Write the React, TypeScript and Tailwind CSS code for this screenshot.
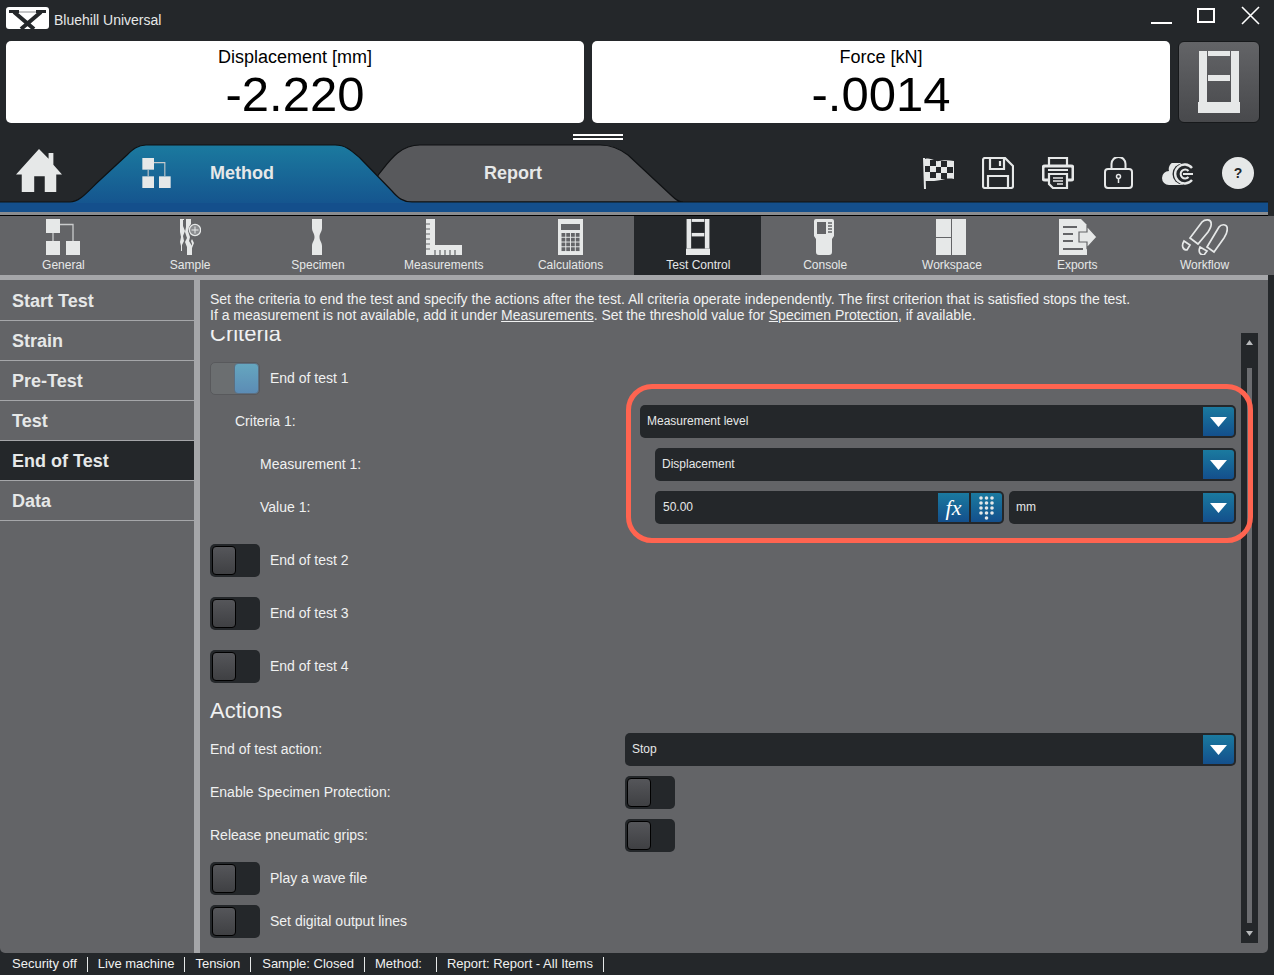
import { ReactNode } from 'react';

const FONT = "font-['Liberation_Sans',Arial,sans-serif]";

function Caret() {
  return (
    <span className="flex h-[29px] w-[31px] items-center justify-center rounded-r-[3px] bg-gradient-to-b from-[#1b7a9f] to-[#144f8c]">
      <svg width="17" height="10" viewBox="0 0 17 10">
        <path d="M0 0h17L8.500 10z" fill="#fff" />
      </svg>
    </span>
  );
}

function Select({ value, className }: { value: string; className: string }) {
  return (
    <div className={`flex h-[33px] items-center justify-between rounded-[5px] bg-[#24272a] pl-[7px] pr-[2px] text-xs text-[#e6e8e8] ${className}`}>
      <span className="mb-[2px]">{value}</span>
      <Caret />
    </div>
  );
}

function Toggle({ on }: { on?: boolean }) {
  if (on) {
    return (
      <div className="flex h-[33px] w-[50px] shrink-0 justify-end rounded-[5px] border border-[#58595c] bg-[#6b6e70]">
        <div className="h-full w-[25px] rounded-[4px] border border-[#5b6f82] bg-gradient-to-b from-[#65a6bf] to-[#5c8cb5]" />
      </div>
    );
  }
  return (
    <div className="flex h-[33px] w-[50px] shrink-0 rounded-[5px] bg-[#24272a] p-[2px]">
      <div className="h-full w-[24px] rounded-[4px] border border-black bg-gradient-to-b from-[#55565a] to-[#3f4043]" />
    </div>
  );
}

function ToggleRow({ label, mt }: { label: string; mt: string }) {
  return (
    <div className={`flex items-center gap-[10px] ${mt}`}>
      <Toggle />
      <span className="mb-[2px]">{label}</span>
    </div>
  );
}

function Label({ children, w }: { children: ReactNode; w: string }) {
  return <span className={`mb-[2px] shrink-0 ${w}`}>{children}</span>;
}

/* ---- icons ---- */
const IC = '#e6e8e8';
const BG = '#636467';

function OrgIcon({ w, h }: { w: number; h: number }) {
  return (
    <svg width={w} height={h} viewBox="0 0 34 36">
      <g fill={IC}>
        <rect x="0" y="0" width="14" height="14" />
        <rect x="0" y="22" width="14" height="14" />
        <rect x="20" y="22" width="14" height="14" />
      </g>
      <path d="M14 5.500h13V22M7 14v8" fill="none" stroke="#c9cbcc" strokeWidth="1.300" />
    </svg>
  );
}

function SampleIcon() {
  return (
    <svg width="21" height="36" viewBox="0 0 21 36">
      <g fill={IC}>
        <path d="M0 0h4v1H3v6l2 5-2 5 1 5-2 4v6H1v-5L0 23l1-5-1-5z" />
        <path d="M6 0h5v5l-2 3-1 4 2 6-1 4 3 5v9H7v-8l-2-5 2-4-2-6 1-5z" />
        <path d="M12 20l2 4-2 5h-1l1-4-1-3z" />
      </g>
      <circle cx="15" cy="11" r="5.600" fill="#8a8c8f" stroke={IC} strokeWidth="1.300" />
      <path d="M11.500 11h7M15 7.500v7" stroke={IC} strokeWidth="1" />
    </svg>
  );
}

function SpecimenIcon() {
  return (
    <svg width="10" height="36" viewBox="0 0 10 36">
      <path d="M0 0h10v9c0 4-2.500 5-2.500 9s2.500 5 2.500 9v9H0v-9c0-4 2.500-5 2.500-9S0 13 0 9z" fill={IC} />
    </svg>
  );
}

function RulerIcon() {
  return (
    <svg width="36" height="36" viewBox="0 0 36 36">
      <path d="M0 0h9v26h27v10H0z" fill={IC} />
      <path d="M0 5h4M0 10h4M0 15h4M0 20h4M0 25h4M0 30h4M9 36v-5M14 36v-5M19 36v-5M24 36v-5M29 36v-5" stroke={BG} strokeWidth="1.200" />
    </svg>
  );
}

function CalcIcon() {
  const cells = [];
  for (let r = 0; r < 4; r++) {
    for (let c = 0; c < 4; c++) {
      cells.push(<rect key={`${r}-${c}`} x={3.500 + c * 4.750} y={14 + r * 4.750} width="3.800" height="3.800" fill={BG} />);
    }
  }
  return (
    <svg width="25" height="36" viewBox="0 0 25 36">
      <rect x="0" y="0" width="25" height="36" fill={IC} />
      <rect x="3" y="5" width="19" height="6" fill={BG} />
      {cells}
    </svg>
  );
}

function FrameIcon({ w, h }: { w: number; h: number }) {
  return (
    <svg width={w} height={h} viewBox="0 0 42 62" preserveAspectRatio="none">
      <g fill={IC}>
        <rect x="1" y="0" width="8" height="51" />
        <rect x="33" y="0" width="8" height="51" />
        <rect x="10" y="0" width="22" height="5" />
        <rect x="10" y="24" width="22" height="6" />
        <rect x="0" y="51" width="42" height="11" />
      </g>
    </svg>
  );
}

function ConsoleIcon() {
  return (
    <svg width="20" height="36" viewBox="0 0 20 36">
      <path d="M2 0h16a2 2 0 0 1 2 2v15l-2 3v13a3 3 0 0 1-3 3H5a3 3 0 0 1-3-3V20L0 17V2a2 2 0 0 1 2-2z" fill={IC} />
      <rect x="3" y="3" width="9" height="12" fill={BG} />
      <path d="M14 4h4M14 7h4M14 10h4M14 13h4" stroke={BG} strokeWidth="1.400" />
    </svg>
  );
}

function WorkspaceIcon() {
  return (
    <svg width="30" height="36" viewBox="0 0 30 36">
      <g fill={IC}>
        <rect x="0" y="0" width="15" height="18" />
        <rect x="0" y="19" width="15" height="17" />
        <rect x="16" y="0" width="14" height="36" />
      </g>
    </svg>
  );
}

function ExportIcon() {
  return (
    <svg width="38" height="36" viewBox="0 0 38 36">
      <path d="M0 0h22l6 6v30H0z" fill={IC} />
      <path d="M4 8h14M4 15h10M4 22h10M4 30h20" stroke={BG} strokeWidth="1.800" />
      <path d="M20 13h8V7l10 11-10 11v-6h-8z" fill={IC} stroke={BG} strokeWidth="1.200" />
    </svg>
  );
}

function WorkflowIcon() {
  return (
    <svg width="47" height="36" viewBox="0 0 47 36" fill="none" stroke={IC} strokeWidth="1.700">
      <path d="M9 19L21 3c3-3 9-3 9 1 1 3-1 6-3 9L17 25z" />
      <path d="M3 22l6 4-3 5c-4 0-6-4-3-9z" />
      <path d="M26 28l12-20c2-3 7-3 8 0 1 4-1 8-3 11L33 33z" />
      <path d="M19 28l7 4-3 4c-4 0-6-3-4-8z" />
    </svg>
  );
}

function TopIcons() {
  return (
    <div className="flex items-start">
      <svg width="31" height="32" viewBox="0 0 31 32" className="ml-[923px]">
        <path d="M1 1l1 31" stroke={IC} strokeWidth="2" />
        <path d="M2 2c6-2 10 3 14 2s10-1 15 0v18c-5-1-9 0-13 1s-9 1-16 1z" fill={IC} />
        <g fill="#24272a">
          <rect x="7" y="3" width="6" height="6" /><rect x="18" y="4" width="6" height="6" />
          <rect x="2" y="9" width="5" height="6" /><rect x="13" y="10" width="5" height="6" /><rect x="24" y="10" width="6" height="6" />
          <rect x="7" y="15" width="6" height="6" /><rect x="18" y="16" width="6" height="6" />
        </g>
      </svg>
      <svg width="32" height="32" viewBox="0 0 32 32" className="ml-[28px]" fill="none" stroke={IC} strokeWidth="2.200">
        <path d="M3 1h20l8 8v20a2 2 0 0 1-2 2H3a2 2 0 0 1-2-2V3a2 2 0 0 1 2-2z" />
        <path d="M8 1v11h14V1M18 4v5" />
        <path d="M6 31V19h20v12" />
      </svg>
      <svg width="32" height="32" viewBox="0 0 32 32" className="ml-[28px]" fill="none" stroke={IC} strokeWidth="2.200">
        <path d="M7 9V1h18v8" />
        <path d="M7 23H3a2 2 0 0 1-2-2V11a2 2 0 0 1 2-2h26a2 2 0 0 1 2 2v10a2 2 0 0 1-2 2h-4" strokeWidth="3" />
        <path d="M6 13h20" strokeWidth="2" />
        <path d="M7 17h18v14H11l-4-4z" fill="#24272a" />
        <path d="M11 21h10M11 24h10M15 27h6" strokeWidth="1.600" />
      </svg>
      <svg width="29" height="32" viewBox="0 0 29 32" className="ml-[30px]" fill="none" stroke={IC} strokeWidth="2">
        <path d="M7.500 12V7a7 7 0 0 1 14 0v5" />
        <rect x="1" y="12" width="27" height="19" rx="3" />
        <circle cx="14.500" cy="19.500" r="2" strokeWidth="1.500" />
        <path d="M14.500 21.500V26" strokeWidth="1.500" />
      </svg>
      <svg width="32" height="22" viewBox="0 0 32 22" className="ml-[29px] mt-[6px]">
        <path d="M7 8a7 7 0 0 0 0 14h14V4a7 7 0 0 0-14 4z" fill={IC} />
        <circle cx="21" cy="11" r="10.500" fill="#24272a" />
        <path d="M30 5a9.500 9.500 0 1 0 0 12" fill="none" stroke={IC} strokeWidth="2.400" />
        <path d="M26.500 8a4.500 4.500 0 1 0 0 6" fill="none" stroke={IC} strokeWidth="2" />
        <path d="M21 11h10" stroke={IC} strokeWidth="2" />
      </svg>
      <div className="ml-[28px] flex h-[32px] w-[32px] items-center justify-center rounded-full bg-[#e6e8e8] text-sm font-bold text-[#24272a]">?</div>
    </div>
  );
}

const NAV = [
  { label: 'General', icon: <OrgIcon w={34} h={36} />, shift: '' },
  { label: 'Sample', icon: <SampleIcon />, shift: '' },
  { label: 'Specimen', icon: <SpecimenIcon />, shift: 'ml-[2px]' },
  { label: 'Measurements', icon: <RulerIcon />, shift: '' },
  { label: 'Calculations', icon: <CalcIcon />, shift: '' },
  { label: 'Test Control', icon: <div className="ml-[2px]"><FrameIcon w={24} h={36} /></div>, shift: 'ml-[2px]', active: true },
  { label: 'Console', icon: <ConsoleIcon />, shift: 'ml-[2px]' },
  { label: 'Workspace', icon: <WorkspaceIcon />, shift: 'ml-[2px]' },
  { label: 'Exports', icon: <ExportIcon />, shift: 'mr-[1px]' },
  { label: 'Workflow', icon: <WorkflowIcon />, shift: '' },
];

const SIDE = ['Start Test', 'Strain', 'Pre-Test', 'Test', 'End of Test', 'Data'];

const STATUS = ['Security off', 'Live machine', 'Tension', 'Sample: Closed', 'Method:', 'Report: Report - All Items'];

export default function App() {
  return (
    <div className={`relative flex h-[975px] w-[1274px] flex-col overflow-hidden bg-[#24272a] ${FONT}`}>
      {/* title bar */}
      <div className="flex h-[41px] shrink-0 items-start">
        <div className="ml-[6px] mt-[7px] h-[22px] w-[43px] rounded-[3px] bg-white">
          <svg width="43" height="22" viewBox="0 0 43 22">
            <g stroke="#24272a" fill="none">
              <path d="M8 5l20 17M35 5L15 22" strokeWidth="4" />
              <path d="M3 4.500h10M30 4.500h10" strokeWidth="3" />
              <path d="M13 5h17" strokeWidth="1" stroke="#8a8c8f" />
            </g>
          </svg>
        </div>
        <span className="ml-[5px] mt-[12px] text-sm leading-4 text-[#e6e8e8]">Bluehill Universal</span>
        <div className="ml-[990px] flex items-start">
          <div className="mt-[22px] h-[2px] w-[21px] bg-white" />
          <div className="ml-[25px] mt-[8px] h-[15px] w-[18px] border-2 border-white" />
          <svg width="19" height="19" viewBox="0 0 19 19" className="ml-[26px] mt-[6px]" stroke="#fff" strokeWidth="1.600">
            <path d="M1 1l17 17M18 1L1 18" />
          </svg>
        </div>
      </div>

      {/* readouts */}
      <div className="flex h-[82px] shrink-0 gap-[8px] pl-[6px]">
        <div className="flex w-[578px] flex-col items-center rounded-[5px] bg-white text-black">
          <span className="mt-[5px] text-lg leading-[22px]">Displacement [mm]</span>
          <span className="mt-[1px] text-[49px] leading-[50px]">-2.220</span>
        </div>
        <div className="flex w-[578px] flex-col items-center rounded-[5px] bg-white text-black">
          <span className="mt-[5px] text-lg leading-[22px]">Force [kN]</span>
          <span className="mt-[1px] text-[49px] leading-[50px]">-.0014</span>
        </div>
        <div className="flex w-[82px] items-center justify-center rounded-[6px] border border-[#17191b] bg-gradient-to-b from-[#636467] to-[#48494c]">
          <FrameIcon w={42} h={62} />
        </div>
      </div>

      {/* grip handle */}
      <div className="flex h-[21px] shrink-0 flex-col items-center pt-[11px]">
        <div className="ml-[-79px] h-[6px] w-[50px] border-y-2 border-white" />
      </div>

      {/* tab strip */}
      <div className="relative h-[59px] shrink-0">
        <svg width="1274" height="69" viewBox="0 0 1274 69" className="absolute left-0 top-0">
          <defs>
            <linearGradient id="tab" x1="0" y1="0" x2="0" y2="1">
              <stop offset="0" stopColor="#1b7a9f" />
              <stop offset="1" stopColor="#144f8c" />
            </linearGradient>
          </defs>
          <path d="M360 58L379 30C390 16 400 1 420 1H600C612 1 620 5 628 11L672 52C676 56 679 58 683 58z" fill="#58595c" stroke="#0f1113" strokeWidth="1.200" />
          <path d="M0 58H70C80 58 88 47 100 36L127 11C133 5 138 1 146 1H335C346 1 352 7 360 14L392 47C398 54 403 58 412 58H1268V69H0z" fill="url(#tab)" />
          <path d="M0 58H70C80 58 88 47 100 36L127 11C133 5 138 1 146 1H335C346 1 352 7 360 14L392 47C398 54 403 58 412 58H1268" fill="none" stroke="#0f1113" strokeWidth="1.200" />
        </svg>
        <svg width="46" height="43" viewBox="0 0 48 44" className="absolute left-[16px] top-[5px]" preserveAspectRatio="none">
          <path d="M24 0l10 10V4h5v12l9 10h-6v18H30V28H19v16H6V26H0z" fill={IC} />
        </svg>
        <div className="absolute left-[142px] top-[14px]"><OrgIcon w={29} h={30} /></div>
        <span className="absolute left-[210px] top-[19px] text-lg font-bold leading-5 text-[#e6e8e8]">Method</span>
        <span className="absolute left-[484px] top-[19px] text-lg font-bold leading-5 text-[#e6e8e8]">Report</span>
        <div className="absolute left-0 top-[13px]"><TopIcons /></div>
      </div>

      {/* blue band and edge */}
      <div className="relative h-[13px] shrink-0 pr-[6px]">
        <div className="h-[9px] bg-[#144f8c]" />
        <div className="h-[3px] bg-[#8a8c8f]" />
        <div className="h-[1px] bg-black" />
      </div>

      {/* ribbon */}
      <div className="flex h-[59px] shrink-0 bg-[#636467] pr-[6px]">
        <div className="flex w-[1268px]">
          {NAV.map((n) => (
            <div key={n.label} className={`flex flex-1 flex-col items-center ${n.active ? 'bg-[#24272a]' : ''}`}>
              <div className="mt-[3px] flex h-[36px] items-center justify-center">{n.icon}</div>
              <span className={`mt-[3px] text-xs leading-[14px] text-[#e6e8e8] ${n.shift}`}>{n.label}</span>
            </div>
          ))}
        </div>
      </div>
      <div className="h-[5px] w-[1268px] shrink-0 bg-[#a5a6a9]" />

      {/* main */}
      <div className="flex h-[673px] shrink-0 pr-[6px]">
        <div className="w-[194px] shrink-0 rounded-bl-[5px] bg-[#636467] pt-[1px]">
          {SIDE.map((s) => (
            <div
              key={s}
              className={`flex h-[40px] items-center border-b border-[#a5a6a9] pl-[12px] text-lg font-bold text-[#e6e8e8] ${s === 'End of Test' ? 'bg-[#24272a]' : ''}`}
            >
              {s}
            </div>
          ))}
        </div>
        <div className="w-[6px] shrink-0 bg-[#a5a6a9]" />
        <div className="relative flex min-w-0 flex-1 flex-col rounded-br-[5px] bg-[#636467] pl-[10px] text-sm text-[#f0f1f1]">
          <p className="mt-[11px] h-[39px] leading-4">
            Set the criteria to end the test and specify the actions after the test. All criteria operate independently. The first criterion that is satisfied stops the test.
            <br />
            If a measurement is not available, add it under <u>Measurements</u>. Set the threshold value for <u>Specimen Protection</u>, if available.
          </p>
          <div className="h-[14px] overflow-hidden">
            <div className="mt-[-10px] text-[22px] leading-[28px]">Criteria</div>
          </div>

          <div className="mt-[18px] flex items-center gap-[10px]">
            <Toggle on />
            <span className="mb-[2px]">End of test 1</span>
          </div>
          <div className="mt-[10px] flex h-[33px] items-center pl-[25px]">
            <Label w="w-[405px]">Criteria 1:</Label>
            <Select value="Measurement level" className="w-[596px]" />
          </div>
          <div className="mt-[10px] flex h-[33px] items-center pl-[50px]">
            <Label w="w-[395px]">Measurement 1:</Label>
            <Select value="Displacement" className="w-[581px]" />
          </div>
          <div className="mt-[10px] flex h-[33px] items-center pl-[50px]">
            <Label w="w-[395px]">Value 1:</Label>
            <div className="flex h-[33px] w-[349px] items-center justify-between rounded-[5px] bg-[#24272a] pl-[8px] pr-[2px] text-xs text-[#e6e8e8]">
              <span className="mb-[2px]">50.00</span>
              <span className="flex gap-[2px]">
                <span className="flex h-[29px] w-[31px] items-center justify-center bg-gradient-to-b from-[#1b7a9f] to-[#144f8c] font-['Liberation_Serif',serif] text-[22px] italic leading-none text-white">
                  fx
                </span>
                <span className="flex h-[29px] w-[31px] items-center justify-center rounded-r-[3px] bg-gradient-to-b from-[#1b7a9f] to-[#144f8c]">
                  <svg width="15" height="24" viewBox="0 0 15 24" fill="#e6e8e8">
                    {[2, 7.500, 13].map((x) => [2, 7, 12, 17].map((y) => <circle key={`${x}-${y}`} cx={x} cy={y} r="1.800" />))}
                    <circle cx="7.500" cy="22" r="1.800" />
                  </svg>
                </span>
              </span>
            </div>
            <Select value="mm" className="ml-[5px] w-[227px]" />
          </div>

          <ToggleRow label="End of test 2" mt="mt-[20px]" />
          <ToggleRow label="End of test 3" mt="mt-[20px]" />
          <ToggleRow label="End of test 4" mt="mt-[20px]" />

          <div className="mt-[14px] text-[22px] leading-[28px]">Actions</div>

          <div className="mt-[8px] flex h-[33px] items-center">
            <Label w="w-[415px]">End of test action:</Label>
            <Select value="Stop" className="w-[611px]" />
          </div>
          <div className="mt-[10px] flex h-[33px] items-center">
            <Label w="w-[415px]">Enable Specimen Protection:</Label>
            <Toggle />
          </div>
          <div className="mt-[10px] flex h-[33px] items-center">
            <Label w="w-[415px]">Release pneumatic grips:</Label>
            <Toggle />
          </div>
          <ToggleRow label="Play a wave file" mt="mt-[10px]" />
          <ToggleRow label="Set digital output lines" mt="mt-[10px]" />

          {/* scrollbar */}
          <div className="absolute left-[1041px] top-[53px] flex h-[610px] w-[17px] flex-col items-center bg-[#24272a] py-[7px]">
            <svg width="7" height="5" viewBox="0 0 7 5"><path d="M0 5h7L3.500 0z" fill="#b8babc" /></svg>
            <div className="mt-[23px] w-[5px] flex-1 bg-[#6b6c70]" />
            <svg width="7" height="5" viewBox="0 0 7 5" className="mt-[8px]"><path d="M0 0h7L3.500 5z" fill="#b8babc" /></svg>
          </div>

          {/* annotation */}
          <div className="pointer-events-none absolute left-[426px] top-[104px] h-[159px] w-[627px] rounded-[26px] border-[5px] border-[#ff6450]" />
        </div>
      </div>

      {/* status bar */}
      <div className="flex h-[22px] shrink-0 items-center pl-[12px] text-[13px] text-[#f0f1f1]">
        {STATUS.map((s) => (
          <div key={s} className={`flex items-center ${s === 'Tension' ? 'mr-[11px]' : 'mr-[10px]'}`}>
            <span>{s}</span>
            <div className={`h-[15px] w-px bg-[#e6e8e8] ${s === 'Method:' ? 'ml-[14px]' : 'ml-[10px]'}`} />
          </div>
        ))}
      </div>
    </div>
  );
}
